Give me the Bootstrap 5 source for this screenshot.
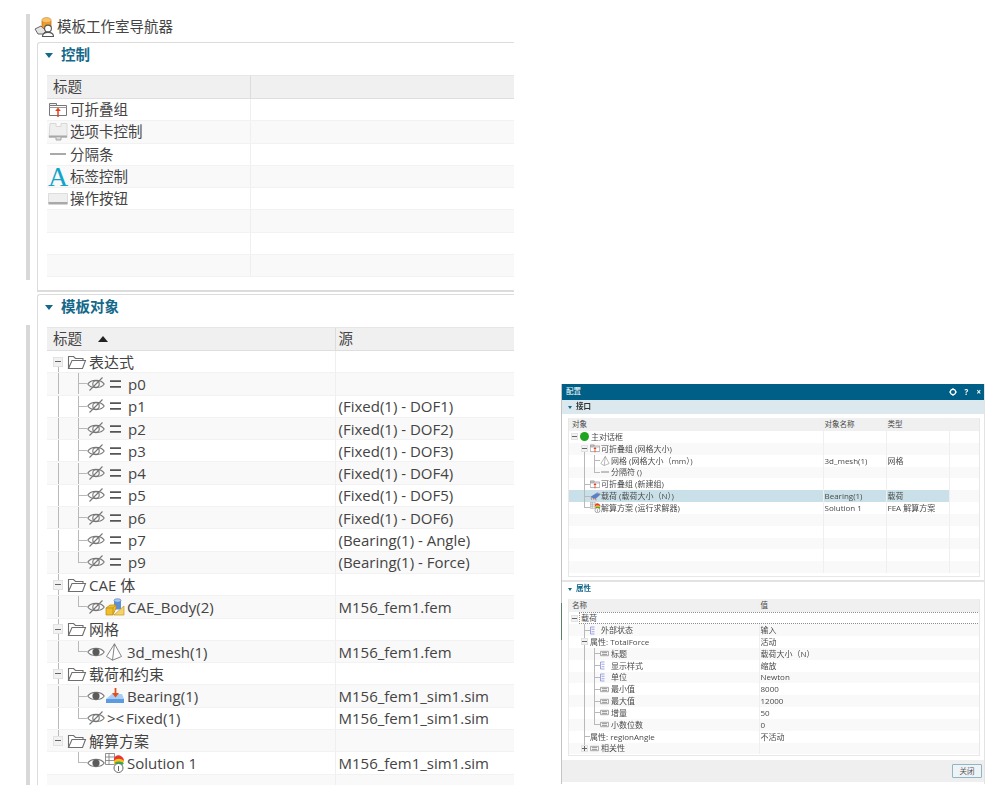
<!DOCTYPE html>
<html lang="en">
  <head>
    <meta charset="UTF-8" />
    <title>模板工作室导航器</title>
    <link href="https://cdn.jsdelivr.net/npm/bootstrap@5.3.0/dist/css/bootstrap.min.css" rel="stylesheet" />
    <script src="https://cdn.jsdelivr.net/npm/bootstrap@5.3.0/dist/js/bootstrap.bundle.min.js"></script>
    <style>
      body {
        font-family: "Open Sans", "Noto Sans CJK SC", sans-serif;
        background: #fff;
        color: #444;
        overflow: hidden;
      }
      .page-wrap { height: 794px; padding: 14px 0 0 26px; }

      /* left navigator */
      .side-strip { width: 4px; flex: none; height: 771px; }
      .side-strip div { background: #d8d8d8; }
      .side-strip div:first-child { height: 266px; margin-bottom: 45px; }
      .side-strip div:last-child { height: 460px; }
      .nav-pane { width: 484px; height: 771px; flex: none; overflow: hidden; }
      .nav-title { height: 28px; padding-left: 4px; font-size: 14.5px; gap: 3px; padding-bottom: 2px; }
      .nav-box {
        margin-left: 7px;
        border: 1px solid #dcdcdc;
        border-right: 0;
        border-radius: 3px 0 0 0;
        padding-left: 9px;
        overflow: hidden;
      }
      .nav-box-a { height: 250px; margin-bottom: 2px; border-bottom-width: 2px; }
      .nav-box-b { height: 491px; border-bottom: 0; }
      .box-head {
        height: 24px;
        margin-left: -2px;
        font-size: 14.5px;
        font-weight: 700;
        color: #14688a;
        gap: 8px;
      }
      .box-gap-a { height: 8px; }
      .box-gap-b { height: 8px; }
      .tri-down { width: 0; height: 0; border: 4px solid transparent; border-top: 5px solid #14688a; border-bottom: 0; flex: none; }

      .grid-big { table-layout: fixed; font-size: 15px; line-height: 1.2; margin: 0; color: #444; }
      .grid-big td, .grid-big th, .grid-small td, .grid-small th {
        padding: 0;
        background: transparent;
        box-shadow: none;
        vertical-align: middle;
        font-weight: 400;
        color: inherit;
        border: 0;
        white-space: nowrap;
      }
      .grid-big th { height: 23px; background: #f0f0f0; border-bottom: 1px solid #dedede; border-top: 1px solid #e6e6e6; padding-left: 6px; font-size: 14.5px; }
      .grid-big th + th, .grid-big td + td { border-left: 1px solid #efefef; padding-left: 3px; }
      .grid-big th + th { border-left-color: #dcdcdc; }
      .grid-big td { height: 22.3px; border-bottom: 1px solid #f2f2f2; }
      .grid-big tbody tr:nth-child(even) td { background: #f9f9f9; }
      .ctl-cell { font-size: 14.5px; gap: 2px; padding-left: 1px; height: 21px; }
      .ctl-ico { width: 20px; flex: none; text-align: center; }
      .ctl-a { font-family: "Liberation Serif", serif; font-size: 28px; line-height: 20px; color: #12a3c8; font-weight: 400; }

      /* tree guides, drawn as backgrounds so the cell stays in flow */
      .tree-cell { height: 100%; padding-left: 1px; }
      .grid-big .tree-cell { height: 21px; }
      .grid-small .tree-cell { padding-left: 0; }
      .tg { flex: none; align-self: stretch; background-repeat: no-repeat; --c: #b9b9b9; --x: 10px; width: 20px; min-height: 11px; }
      .tg-s { width: 10px; --x: 5px; }
      .tg-s:nth-child(2) { width: 11px; }
      .tg-s:nth-child(3) { --x: 4px; }
      .tg-w { width: 19px; }
      .tg-v { background-image: linear-gradient(var(--c), var(--c)); background-position: var(--x) 0; background-size: 1px 100%; }
      .tg-l { background-image: linear-gradient(var(--c), var(--c)), linear-gradient(var(--c), var(--c)); background-position: var(--x) 0, var(--x) 50%; background-size: 1px 50%, 100% 1px; }
      .tg-t { background-image: linear-gradient(var(--c), var(--c)), linear-gradient(var(--c), var(--c)); background-position: var(--x) 0, var(--x) 50%; background-size: 1px 100%, 100% 1px; }
      .tg-d { background-image: linear-gradient(var(--c), var(--c)); background-position: var(--x) 100%; background-size: 1px 50%; }
      .tg-u { background-image: linear-gradient(var(--c), var(--c)); background-position: var(--x) 0; background-size: 1px 50%; }
      .tg-box { display: flex; align-items: center; justify-content: flex-start; }
      .tg-box i {
        display: block;
        width: 10px; height: 10px;
        margin-left: 5px;
        background: #f2f2f2 linear-gradient(#666, #666) center / 6px 1px no-repeat;
        border: 1px solid #e2e2e2;
      }
      .tg-s.tg-box i { width: 7px; height: 7px; margin-left: 2px; background-size: 5px 1px; border-width: 1px; }
      .tg-s.tg-plus i {
        background: #f2f2f2 linear-gradient(#666, #666) center / 5px 1px no-repeat;
        background-image: linear-gradient(#666, #666), linear-gradient(#666, #666);
        background-size: 5px 1px, 1px 5px;
        background-position: center, center;
      }
      .eq-ico { margin: 0 7px 0 5px; }
      .tg-xx { font-size: 15px; width: 21px; padding-left: 2px; flex: none; }
      .ico-slot { width: 22px; flex: none; }
      .tree-ico { flex: none; display: block; }

      /* right dialog */
      .cfg-dlg {
        width: 424px;
        height: 400px;
        margin: 370px 0 0 47px;
        flex: none;
        padding-left: 1px;
        background: linear-gradient(#c4c4c4 219px, #5d7f6a 219px, #5d7f6a 256px, #c4c4c4 256px) left top / 1px 100% no-repeat;
        border-right: 1px solid #e4e4e4;
        font-size: 8px;
        line-height: 1;
        color: #4a4a4a;
        filter: blur(.35px);
      }
      .cfg-bar { height: 16px; background: #005f87; color: #fff; padding: 0 3px 0 4px; font-size: 7.5px; }
      .cfg-bar-btns { gap: 8px; font-size: 8px; font-weight: 700; }
      .cfg-head-a { height: 14px; background: #dbe9ef; padding-left: 6px; gap: 4px; font-size: 7.5px; font-weight: 600; color: #333; }
      .cfg-head-b { height: 18px; padding: 0 0 2px 6px; gap: 4px; font-size: 7.5px; font-weight: 600; color: #14688a; margin-top: -1px; }
      .cfg-head-a .tri-down, .cfg-head-b .tri-down { border-width: 2px; border-top-width: 3px; border-top-color: #14688a; }
      .grid-small-wrap { margin: 0 4px 0 6px; border: 1px solid #e8e8e8; border-top: 0; overflow: hidden; }
      .grid-small { table-layout: fixed; margin: 0; color: #4a4a4a; font-size: 8px; }
      .grid-small th { height: 13px; background: #f0f0f0; padding-left: 3px; font-size: 7.5px; }
      .grid-small th + th, .grid-small td + td { border-left: 1px solid #efefef; padding-left: 1px; }
      .grid-small td { height: 11.85px; }
      .grid-small tbody tr:nth-child(even) td { background: #f9f9f9; }
      .grid-small tbody tr.row-sel td { background: #c9e0e8; }
      .grid-small tbody tr.row-sel td:last-child { background: #f9f9f9; }
      .grid-small .cell-focus { display: block; height: 12px; line-height: 10px; border: 1px dotted #8f8f8f; background: #fff; padding-left: 1px; margin-right: 1px; }
      .grid-small .row-focus td + td { border-left: 0; padding: 0; }
      .sep-bar { height: 2px; background: #e3e3e3; margin-top: 3px; }
      .foot-row { height: 22px; background: #efefef; margin-top: 4px; padding-right: 2px; }
      .foot-btn { width: 30px; height: 14px; padding: 0; font-size: 7.5px; line-height: 1; background: #eef3f5; border: 1px solid #8fb6c6; border-radius: 1px; color: #555; }
    </style>
  </head>
  <body>
    <svg width="0" height="0" class="d-block">
      <defs>
        <symbol id="i-folder" viewBox="0 0 20 16">
          <path d="M1.5 14.5V2.500h5l2 2h7.500v2.500M1.500 14.500l3.500-8h13.500l-3 8z" fill="#fff" stroke="#6e6e6e" stroke-width="1.100" />
        </symbol>
        <symbol id="i-eye" viewBox="0 0 18 14">
          <path d="M.8 7C4 2.200 14 2.200 17.200 7 14 11.800 4 11.800 .8 7z" fill="#fff" stroke="#777" stroke-width="1.100" />
          <circle cx="9" cy="7" r="3.600" fill="#5a5a5a" />
        </symbol>
        <symbol id="i-eye-off" viewBox="0 0 18 14">
          <path d="M.8 7C4 2.200 14 2.200 17.200 7 14 11.800 4 11.800 .8 7z" fill="none" stroke="#777" stroke-width="1.100" />
          <circle cx="9" cy="7" r="3.200" fill="none" stroke="#777" stroke-width="1.100" />
          <path d="M2.500 13.500 15.500 .5" stroke="#777" stroke-width="1.100" />
        </symbol>
        <symbol id="i-eq" viewBox="0 0 11 8">
          <path d="M0 1.200h11M0 6.800h11" stroke="#555" stroke-width="1.800" />
        </symbol>
        <symbol id="i-group" viewBox="0 0 18 16">
          <path d="M.5 3.500h17v10H.5z" fill="#fff" stroke="#777" />
          <path d="M.5 1.500h7v2H.5z" fill="#eee" stroke="#777" />
          <path d="M.5 5.500h17" stroke="#999" />
          <path d="M9 7v8" stroke="#e2401a" stroke-width="1.500" />
          <path d="M6.200 9 9 5.500 11.800 9z" fill="#e2401a" />
        </symbol>
        <symbol id="i-tabs" viewBox="0 0 20 18">
          <path d="M2 .5h6v3h5v-3h6v14H1z" fill="#efefef" stroke="#d8d8d8" />
          <path d="M1 12.500h18v2H1z" fill="#a8a8a8" />
          <path d="M8 14v3h5v-3" fill="#d8d8d8" stroke="#a8a8a8" />
        </symbol>
        <symbol id="i-button" viewBox="0 0 20 12">
          <path d="M.5 .5h19v10H.5z" fill="#efefef" stroke="#ddd" />
          <path d="M.5 9h19v2.500H.5z" fill="#a9a9a9" />
        </symbol>
        <symbol id="i-cae" viewBox="0 0 20 18">
          <path d="M9 2.500v9h7v-9z" fill="#5c8fd8" />
          <ellipse cx="12.500" cy="2.500" rx="3.500" ry="1.800" fill="#a9c8f0" stroke="#4a76b8" stroke-width=".6" />
          <path d="M1 10l4-3h6v3l-3 7H1z" fill="#f0be2e" stroke="#b98a12" stroke-width=".7" />
          <path d="M1 10h7l3-3M8 10v7" fill="none" stroke="#b98a12" stroke-width=".7" />
          <path d="M9 17l10-9v9z" fill="#f6d36a" stroke="#c79a22" stroke-width=".7" />
        </symbol>
        <symbol id="i-mesh" viewBox="0 0 18 18">
          <path d="M9.500 .8 1.500 13.500 7.500 17.200l9-3.700zM9.500 .8 7.500 17.200" fill="#fff" stroke="#777" stroke-width=".9" />
        </symbol>
        <symbol id="i-bearing" viewBox="0 0 20 18">
          <path d="M1 12l6-5h10l2 5v4H1z" fill="#a7cdf3" />
          <path d="M1 12h18v4H1z" fill="#5c9be0" />
          <path d="M10.500 1v6" stroke="#e2501a" stroke-width="1.800" />
          <path d="M7 6h7l-3.500 4.500z" fill="#e2501a" />
        </symbol>
        <symbol id="i-solution" viewBox="0 0 20 20">
          <path d="M.5 .5h9v11h-9zM.5 4h9M.5 7.500h9M4 .5v11" fill="#fff" stroke="#777" stroke-width=".8" />
          <path d="M9 6c1-5 8-5 10 1l-2 4H9z" fill="#e33" />
          <path d="M9 8c2-3 7-3 10 0l-2 3H9z" fill="#f4c21a" />
          <path d="M10 9.500c2-1.500 6-1 9 .5l-2 2.500h-6z" fill="#2fae4c" />
          <circle cx="13.500" cy="15" r="4.500" fill="#fff" stroke="#666" />
          <path d="M13.500 13v5" stroke="#666" stroke-width="1" />
        </symbol>
        <symbol id="i-load" viewBox="0 0 20 16">
          <path d="M1 9 12 2l7 2-9 8z" fill="#5c7fc8" stroke="#44619c" stroke-width=".6" />
          <path d="M13 1l5 3" stroke="#999" stroke-width="2" />
          <path d="M2 11l1 3M6 11l1 3M10 12l1 3" stroke="#e2401a" stroke-width="1.200" />
        </symbol>
        <symbol id="i-list" viewBox="0 0 10 16">
          <path d="M1 1v14M1 1h8M3 5.500h6M3 10.500h6M1 15h8" stroke="#7a80d8" stroke-width="1.400" fill="none" />
        </symbol>
        <symbol id="i-str" viewBox="0 0 10 8">
          <path d="M.5 1.500h9v5h-9z" fill="#fff" stroke="#999" />
          <path d="M2 3h6M2 5h6" stroke="#666" stroke-width=".8" />
        </symbol>
      </defs>
    </svg>

    <div class="page-wrap d-flex align-items-start">
      <div class="side-strip"><div></div><div></div></div>

      <div class="nav-pane">
        <div class="nav-title d-flex align-items-center">
          <svg width="20" height="20" viewBox="0 0 20 20">
            <path d="M1 12l6-3 5 5-3 3H4z" fill="#e4e4e4" stroke="#666" />
            <path d="M8 3c0-3 9-3 9 0v7c0 2-9 2-9 0z" fill="#ef9a2c" stroke="#b46a10" stroke-width=".7" />
            <ellipse cx="12.500" cy="3" rx="4.500" ry="2" fill="#f7c26a" />
            <circle cx="14" cy="11.500" r="3.400" fill="#fff" stroke="#555" stroke-width="1.100" />
            <path d="M8.500 19.500c0-5.500 11-5.500 11 0z" fill="#fff" stroke="#555" stroke-width="1.100" />
          </svg>
          <span>模板工作室导航器</span>
        </div>

        <div class="nav-box nav-box-a">
          <div class="box-head d-flex align-items-center"><span class="tri-down"></span><span>控制</span></div>
          <div class="box-gap-a"></div>
          <table class="table table-borderless grid-big" style="width: 520px">
            <colgroup><col style="width: 203px" /><col /></colgroup>
            <thead><tr><th>标题</th><th></th></tr></thead>
            <tbody id="ctl-rows"></tbody>
          </table>
        </div>

        <div class="nav-box nav-box-b">
          <div class="box-head d-flex align-items-center"><span class="tri-down"></span><span>模板对象</span></div>
          <div class="box-gap-b"></div>
          <table class="table table-borderless grid-big" style="width: 520px">
            <colgroup><col style="width: 288px" /><col /></colgroup>
            <thead>
              <tr>
                <th>
                  <span class="d-flex align-items-center gap-3">标题
                    <svg width="10" height="6" viewBox="0 0 10 6"><path d="M0 6 5 0l5 6z" fill="#222" /></svg>
                  </span>
                </th>
                <th>源</th>
              </tr>
            </thead>
            <tbody id="obj-rows"></tbody>
          </table>
        </div>
      </div>

      <div class="cfg-dlg d-flex flex-column">
        <div class="cfg-bar d-flex align-items-center justify-content-between">
          <span>配置</span>
          <span class="cfg-bar-btns d-flex align-items-center">
            <svg width="8" height="8" viewBox="0 0 8 8"><circle cx="4" cy="4" r="2.600" fill="none" stroke="#fff" stroke-width="1.100" /><path d="M4 0v1.500M4 6.500V8M0 4h1.500M6.500 4H8" stroke="#fff" /></svg>
            <span>?</span>
            <span>×</span>
          </span>
        </div>
        <div class="cfg-head-a d-flex align-items-center"><span class="tri-down"></span><span>接口</span></div>
        <div class="grid-small-wrap mt-1">
          <table class="table table-borderless grid-small" style="width: 412px">
            <colgroup><col style="width: 254px" /><col style="width: 63px" /><col style="width: 63px" /><col /></colgroup>
            <thead><tr><th>对象</th><th>对象名称</th><th>类型</th><th></th></tr></thead>
            <tbody id="iface-rows"></tbody>
          </table>
          <div style="height: 3px"></div>
        </div>
        <div class="sep-bar"></div>
        <div class="cfg-head-b d-flex align-items-center"><span class="tri-down"></span><span>属性</span></div>
        <div class="grid-small-wrap">
          <table class="table table-borderless grid-small" style="width: 412px">
            <colgroup><col style="width: 190px" /><col /></colgroup>
            <thead><tr><th>名称</th><th>值</th></tr></thead>
            <tbody id="prop-rows"></tbody>
          </table>
          <div style="height: 1px"></div>
        </div>
        <div class="foot-row d-flex align-items-center justify-content-end">
          <button type="button" class="btn foot-btn">关闭</button>
        </div>
      </div>
    </div>

    <script>
      const ico = (id, w, h) => `<svg class="tree-ico" width="${w}" height="${h}"><use href="#${id}" /></svg>`;
      const slot = (inner) => `<span class="ico-slot">${inner}</span>`;
      const segs = (list) => list.map((c) => c === "box" || c.startsWith("box ")
        ? `<span class="tg tg-w tg-box ${c.slice(4)}"><i></i></span>`
        : `<span class="tg ${c}"></span>`).join("");
      const small = (list) => list.map((c) => c.startsWith("box")
        ? `<span class="tg tg-s tg-box ${c.slice(4)}"><i></i></span>`
        : `<span class="tg tg-s ${c}"></span>`).join("");

      // control list at the top of the navigator
      const ctl = [
        [ico("i-group", 18, 16), "可折叠组"],
        [ico("i-tabs", 20, 18), "选项卡控制"],
        [`<svg class="tree-ico" width="18" height="2"><path d="M1 1h16" stroke="#555" /></svg>`, "分隔条"],
        [`<span class="ctl-a">A</span>`, "标签控制"],
        [ico("i-button", 20, 12), "操作按钮"],
        ["", ""], ["", ""], ["", ""],
      ];
      document.getElementById("ctl-rows").innerHTML = ctl
        .map(([i, t]) => `<tr><td><div class="ctl-cell d-flex align-items-center"><span class="ctl-ico d-flex justify-content-center">${i}</span><span>${t}</span></div></td><td></td></tr>`)
        .join("");

      // template objects tree
      const folder = (t, box) => ({ g: [box], i: slot(ico("i-folder", 20, 16)), t, s: "" });
      const eq = `<svg class="tree-ico eq-ico" width="11" height="8"><use href="#i-eq" /></svg>`;
      const param = (n, src, g) => ({ g: ["tg-v", g], i: ico("i-eye-off", 18, 14) + eq, t: n, s: src });
      const obj = [
        folder("表达式", "box tg-d"),
        param("p0", "", "tg-t"),
        param("p1", "(Fixed(1) - DOF1)", "tg-t"),
        param("p2", "(Fixed(1) - DOF2)", "tg-t"),
        param("p3", "(Fixed(1) - DOF3)", "tg-t"),
        param("p4", "(Fixed(1) - DOF4)", "tg-t"),
        param("p5", "(Fixed(1) - DOF5)", "tg-t"),
        param("p6", "(Fixed(1) - DOF6)", "tg-t"),
        param("p7", "(Bearing(1) - Angle)", "tg-t"),
        param("p9", "(Bearing(1) - Force)", "tg-l"),
        folder("CAE 体", "box tg-v"),
        { g: ["tg-v", "tg-l"], i: ico("i-eye-off", 18, 14) + slot(ico("i-cae", 20, 18)), t: "CAE_Body(2)", s: "M156_fem1.fem" },
        folder("网格", "box tg-v"),
        { g: ["tg-v", "tg-l"], i: ico("i-eye", 18, 14) + slot(ico("i-mesh", 18, 18)), t: "3d_mesh(1)", s: "M156_fem1.fem" },
        folder("载荷和约束", "box tg-v"),
        { g: ["tg-v", "tg-t"], i: ico("i-eye", 18, 14) + slot(ico("i-bearing", 20, 18)), t: "Bearing(1)", s: "M156_fem1_sim1.sim" },
        { g: ["tg-v", "tg-l"], i: ico("i-eye-off", 18, 14) + `<span class="tg-xx">&gt;&lt;</span>`, t: "Fixed(1)", s: "M156_fem1_sim1.sim" },
        folder("解算方案", "box tg-u"),
        { g: ["", "tg-l"], i: ico("i-eye", 18, 14) + slot(ico("i-solution", 20, 20)), t: "Solution 1", s: "M156_fem1_sim1.sim" },
        { g: [], i: "", t: "", s: "" },
      ];
      document.getElementById("obj-rows").innerHTML = obj
        .map((r) => {
          const g = r.g.map((c, n) => c.startsWith("box") ? segs([c]) : `<span class="tg ${c} ${n === 1 ? "tg-w" : ""}"></span>`).join("");
          return `<tr><td><div class="tree-cell d-flex align-items-center">${g}${r.i}<span>${r.t}</span></div></td><td>${r.s}</td></tr>`;
        })
        .join("");

      // right dialog, interface table
      const dot = `<svg class="tree-ico" style="margin: 0 2px 0 1px" width="9" height="9"><circle cx="4.500" cy="4.500" r="4.500" fill="#1fa51f" /></svg>`;
      const iface = [
        [["box"], dot, "主对话框", "", ""],
        [["", "box tg-d"], ico("i-group", 10, 9) + `<span style="width: 1px"></span>`, "可折叠组 (网格大小)", "", ""],
        [["", "tg-v", "tg-t"], ico("i-mesh", 10, 10) + `<span style="width: 1px"></span>`, "网格 (网格大小（mm）)", "3d_mesh(1)", "网格"],
        [["", "tg-v", "tg-l"], `<svg class="tree-ico" width="11" height="2"><path d="M1 1h8" stroke="#888" /></svg>`, "分隔符 ()", "", ""],
        [["", "tg-t"], ico("i-group", 10, 9) + `<span style="width: 1px"></span>`, "可折叠组 (新建组)", "", ""],
        [["", "tg-t"], ico("i-load", 11, 9), "载荷 (载荷大小（N）)", "Bearing(1)", "载荷"],
        [["", "tg-l"], ico("i-solution", 11, 11), "解算方案 (运行求解器)", "Solution 1", "FEA 解算方案"],
        [[], "", "", "", ""], [[], "", "", "", ""], [[], "", "", "", ""], [[], "", "", "", ""], [[], "", "", "", ""],
      ];
      document.getElementById("iface-rows").innerHTML = iface
        .map(([g, i, t, n, k], idx) => `<tr class="${idx === 5 ? "row-sel" : ""}"><td><div class="tree-cell d-flex align-items-center">${small(g)}${i}<span>${t}</span></div></td><td>${n}</td><td>${k}</td><td></td></tr>`)
        .join("");

      // right dialog, properties table
      const pad = (w) => `<span style="width: ${w}px"></span>`;
      const prop = [
        [["box"], "", "载荷", ""],
        [["", "tg-t"], ico("i-list", 5, 9) + pad(6), "外部状态", "输入"],
        [["", "box tg-v"], "", "属性: TotalForce", "活动"],
        [["", "tg-v", "tg-t"], ico("i-str", 9, 7) + pad(2), "标题", "载荷大小（N）"],
        [["", "tg-v", "tg-t"], ico("i-list", 5, 9) + pad(6), "显示样式", "缩放"],
        [["", "tg-v", "tg-t"], ico("i-list", 5, 9) + pad(6), "单位", "Newton"],
        [["", "tg-v", "tg-t"], ico("i-str", 9, 7) + pad(2), "最小值", "8000"],
        [["", "tg-v", "tg-t"], ico("i-str", 9, 7) + pad(2), "最大值", "12000"],
        [["", "tg-v", "tg-t"], ico("i-str", 9, 7) + pad(2), "增量", "50"],
        [["", "tg-v", "tg-l"], ico("i-str", 9, 7) + pad(2), "小数位数", "0"],
        [["", "tg-t"], "", "属性: regionAngle", "不活动"],
        [["", "box tg-plus tg-u"], ico("i-str", 9, 7) + pad(2), "相关性", ""],
      ];
      document.getElementById("prop-rows").innerHTML = prop
        .map(([g, i, t, v], idx) => idx === 0
          ? `<tr class="row-focus"><td colspan="2"><div class="tree-cell d-flex align-items-center">${small(g)}<span class="cell-focus flex-grow-1">${t}</span></div></td></tr>`
          : `<tr><td><div class="tree-cell d-flex align-items-center">${small(g)}${i}<span>${t}</span></div></td><td>${v}</td></tr>`)
        .join("");
    </script>
  </body>
</html>
